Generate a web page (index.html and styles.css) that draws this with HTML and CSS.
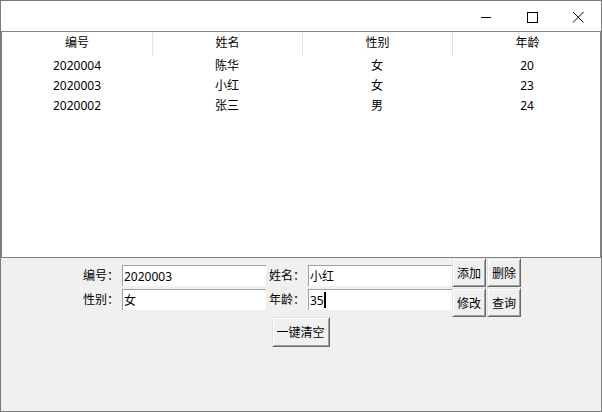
FILE: index.html
```html
<!DOCTYPE html>
<html>
  <head>
    <meta charset="UTF-8">
    <link rel="stylesheet" href="styles.css">
  </head>
  <body>
    <div id="window">
      <div class="titlebar">
        <span class="winbtn">
          <svg width="12" height="12" viewBox="0 0 12 12"><path d="M1 6.5h10" stroke="#000" stroke-width="1"/></svg>
        </span>
        <span class="winbtn">
          <svg width="12" height="12" viewBox="0 0 12 12"><rect x="1.5" y="1.5" width="10" height="10" fill="none" stroke="#000" stroke-width="1"/></svg>
        </span>
        <span class="winbtn">
          <svg width="12" height="12" viewBox="0 0 12 12"><path d="M1 1L11.5 11.5M11.5 1L1 11.5" stroke="#000" stroke-width="1"/></svg>
        </span>
      </div>

      <div class="tree">
        <div class="row head">
          <span class="cell">编号</span>
          <span class="cell">姓名</span>
          <span class="cell">性别</span>
          <span class="cell">年龄</span>
        </div>
        <div class="row">
          <span class="cell">2020004</span>
          <span class="cell">陈华</span>
          <span class="cell">女</span>
          <span class="cell">20</span>
        </div>
        <div class="row">
          <span class="cell">2020003</span>
          <span class="cell">小红</span>
          <span class="cell">女</span>
          <span class="cell">23</span>
        </div>
        <div class="row">
          <span class="cell">2020002</span>
          <span class="cell">张三</span>
          <span class="cell">男</span>
          <span class="cell">24</span>
        </div>
      </div>

      <div class="panel">
        <div class="panel-top">
          <div class="fields">
            <span class="label">编号：</span>
            <div class="entry">2020003</div>
            <span class="label">姓名：</span>
            <div class="entry">小红</div>
            <span class="label">性别：</span>
            <div class="entry">女</div>
            <span class="label">年龄：</span>
            <div class="entry">35<span class="caret"></span></div>
          </div>
          <div class="actions">
            <button class="btn">添加</button>
            <button class="btn">删除</button>
            <button class="btn">修改</button>
            <button class="btn">查询</button>
          </div>
        </div>
        <div class="panel-bottom">
          <button class="btn clear">一键清空</button>
        </div>
      </div>
    </div>
  </body>
</html>
```

FILE: styles.css
```css
html, body {
  margin: 0;
  padding: 0;
  background: #f0f0f0;
}
body {
  font-family: "Noto Sans", "Noto Sans CJK SC", sans-serif;
  font-size: 12px;
  color: #000;
}
#window {
  width: 602px;
  height: 412px;
  box-sizing: border-box;
  border: 1px solid #7a7a7a;
  display: flex;
  flex-direction: column;
  background: #f0f0f0;
}
.titlebar {
  height: 30px;
  background: #fff;
  display: flex;
  justify-content: flex-end;
  align-items: flex-start;
}
.winbtn {
  width: 46px;
  height: 30px;
  display: flex;
  align-items: center;
  justify-content: center;
}
.winbtn:first-child {
  padding-left: 2px;
}
.winbtn svg {
  display: block;
  margin-top: 1px;
}

.tree {
  height: 227px;
  box-sizing: border-box;
  border: 1px solid #828282;
  background: #fff;
  overflow: hidden;
}
.row {
  display: flex;
  height: 20px;
  line-height: 20px;
}
.row.head {
  height: 24px;
  line-height: 22px;
  margin-bottom: -0.5px;
}
.cell {
  flex: none;
  width: 150px;
  box-sizing: border-box;
  text-align: center;
  white-space: nowrap;
}
.head .cell + .cell {
  border-left: 1px solid #e5e5e5;
}

.panel {
  flex: 1;
  background: #f0f0f0;
}
.panel-top {
  display: flex;
  justify-content: center;
  align-items: flex-start;
  padding-right: 1px;
}
.fields {
  display: grid;
  grid-template-columns: 42px 144px 42px 144px;
  row-gap: 3px;
  margin-top: 7px;
}
.label {
  height: 21px;
  line-height: 21px;
  text-align: center;
  white-space: nowrap;
}
.entry {
  height: 21px;
  box-sizing: border-box;
  background: #fff;
  border-top: 1px solid #a0a0a0;
  border-left: 1px solid #a0a0a0;
  padding-left: 1px;
  line-height: 19px;
  white-space: nowrap;
  display: flex;
  align-items: center;
}
.caret {
  display: inline-block;
  width: 2px;
  height: 16px;
  background: #000;
}
.actions {
  display: grid;
  grid-template-columns: 34px 34px;
  grid-auto-rows: 29px;
  gap: 1px;
}
.btn {
  font: inherit;
  color: #000;
  background: #f0f0f0;
  margin: 0;
  padding: 0;
  box-sizing: border-box;
  border: 1px solid;
  border-color: #e3e3e3 #696969 #696969 #e3e3e3;
  box-shadow: inset 1px 1px #fff, inset -1px -1px #a0a0a0;
  white-space: nowrap;
}
.panel-bottom {
  display: flex;
  justify-content: center;
  padding-right: 1px;
}
.clear {
  width: 58px;
  height: 30px;
}
```
